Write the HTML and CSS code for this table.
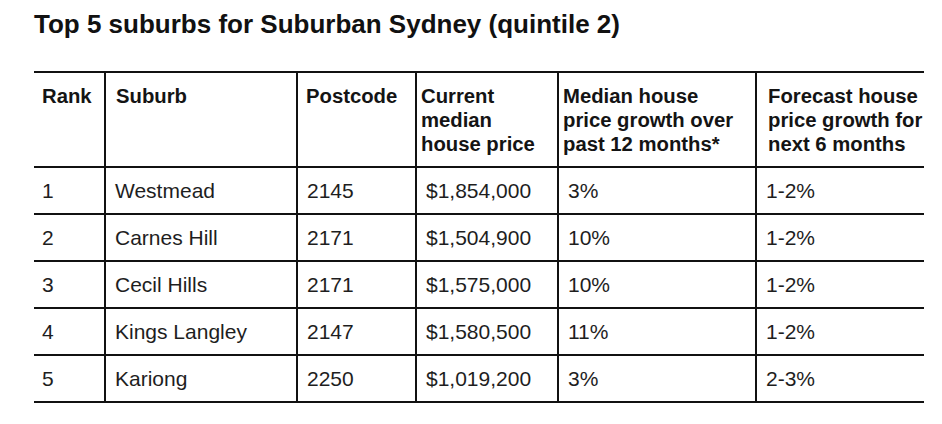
FILE: index.html
```html
<!DOCTYPE html>
<html lang="en">
<head>
<meta charset="utf-8">
<title>Top 5 suburbs for Suburban Sydney (quintile 2)</title>
<link rel="stylesheet" href="styles.css">
</head>
<body>
<h1 class="title">Top 5 suburbs for Suburban Sydney (quintile 2)</h1>
<div class="table-clip">
  <table class="suburbs">
    <colgroup>
      <col class="c-rank">
      <col class="c-suburb">
      <col class="c-post">
      <col class="c-price">
      <col class="c-growth">
      <col class="c-forecast">
    </colgroup>
    <thead>
      <tr>
        <th>Rank</th>
        <th class="pad-suburb">Suburb</th>
        <th>Postcode</th>
        <th class="tight">Current median house price</th>
        <th class="tight">Median house price growth over past 12 months*</th>
        <th class="pad-wide">Forecast house price growth for next 6 months</th>
      </tr>
    </thead>
    <tbody>
      <tr><td>1</td><td>Westmead</td><td>2145</td><td>$1,854,000</td><td>3%</td><td>1-2%</td></tr>
      <tr><td>2</td><td>Carnes Hill</td><td>2171</td><td>$1,504,900</td><td>10%</td><td>1-2%</td></tr>
      <tr><td>3</td><td>Cecil Hills</td><td>2171</td><td>$1,575,000</td><td>10%</td><td>1-2%</td></tr>
      <tr><td>4</td><td>Kings Langley</td><td>2147</td><td>$1,580,500</td><td>11%</td><td>1-2%</td></tr>
      <tr><td>5</td><td>Kariong</td><td>2250</td><td>$1,019,200</td><td>3%</td><td>2-3%</td></tr>
    </tbody>
  </table>
</div>
</body>
</html>
```
FILE: styles.css
```css
html, body {
  margin: 0;
  background: #ffffff;
}

body {
  padding: 9px 0 0 34px;
  font-family: "Liberation Sans", Arial, sans-serif;
  color: #1c1c1c;
}

.title {
  margin: 0;
  font-size: 26px;
  line-height: 30px;
  font-weight: bold;
  color: #111111;
}

.table-clip {
  margin-top: 32px;
  width: 890px;
  overflow: hidden;
}

.suburbs {
  table-layout: fixed;
  width: 930px;
  border-collapse: separate;
  border-spacing: 0;
  border-top: 2px solid #111111;
}

.c-rank { width: 70px; }
.c-suburb { width: 192px; }
.c-post { width: 119px; }
.c-price { width: 142px; }
.c-growth { width: 198px; }
.c-forecast { width: 209px; }

.suburbs th,
.suburbs td {
  text-align: left;
  vertical-align: top;
  line-height: 24px;
  border-bottom: 2px solid #111111;
  border-left: 2px solid #111111;
}

.suburbs th:first-child,
.suburbs td:first-child {
  border-left: none;
}

.suburbs th {
  font-size: 20.3px;
  font-weight: bold;
  color: #141414;
  padding: 11px 10px 10px 8px;
}

.suburbs th.pad-suburb { padding-left: 10px; }
.suburbs th.tight { padding-left: 4px; padding-right: 12px; }
.suburbs th.pad-wide { padding-left: 11px; }

.suburbs td {
  font-size: 21px;
  font-weight: normal;
  color: #1e1e1e;
  padding: 11px 8px 10px 9px;
}

.suburbs td:first-child { padding-left: 8px; }
```
